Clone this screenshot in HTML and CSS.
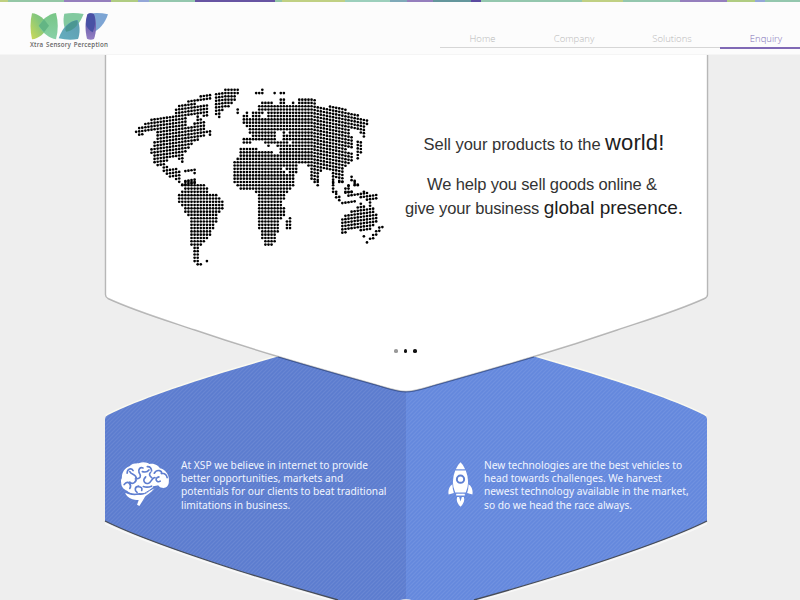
FILE: index.html
```
<!DOCTYPE html>
<html lang="en">
<head>
<meta charset="utf-8">
<title>XSP - Xtra Sensory Perception</title>
<link rel="stylesheet" href="styles.css">
</head>
<body>
<header class="header">
  <div class="strip"></div>
  <div class="bar">
    <div class="brand">
      <svg class="logo" viewBox="0 0 240 84" width="80" height="28">
        <defs>
          <linearGradient id="g1" x1="0" y1="1" x2="1" y2="0"><stop offset="0" stop-color="#cfda55"/><stop offset=".6" stop-color="#84c77c"/><stop offset="1" stop-color="#72bd80"/></linearGradient>
          <linearGradient id="g2" x1="0" y1="0" x2="0" y2="1"><stop offset="0" stop-color="#78c686"/><stop offset="1" stop-color="#88d0a8"/></linearGradient>
          <linearGradient id="g3" x1="0" y1="1" x2="1" y2="0"><stop offset="0" stop-color="#64aebf"/><stop offset="1" stop-color="#5f9db0"/></linearGradient>
          <linearGradient id="g4" x1="0" y1="0" x2="0" y2="1"><stop offset="0" stop-color="#4f4a9f"/><stop offset="1" stop-color="#9580c4"/></linearGradient>
        </defs>
        <path fill="url(#g1)" d="M6 4C26 4 46 24 55 42C46 63 25 81 6 82C0 55 0 28 6 4Z"/>
        <path fill="url(#g2)" d="M78 3C56 6 35 23 26 42C37 62 58 79 78 82C85 56 85 28 78 3Z"/>
        <path fill="#63b584" d="M42 22L57 41L42 61L26 41Z"/>
        <path fill="#82c99f" d="M103 5Q131 0 161 6C150 34 133 53 110 61C101 46 98 24 103 5Z"/>
        <path fill="url(#g3)" d="M86 79C98 47 116 27 143 24C151 44 150 66 144 81Q116 86 86 79Z"/>
        <path fill="#4b9792" d="M140 25C146 34 141 43 134 47C126 54 117 58 109 59Q104 54 107 45Q121 28 140 25Z"/>
        <path fill="#7da5d4" d="M176 5Q205 0 234 7C225 34 208 54 188 62L170 40Z"/>
        <path fill="url(#g4)" d="M172 7Q183 0 192 7C201 29 199 62 192 81Q182 86 171 80C165 57 165 29 172 7Z"/>
        <path fill="#4851a5" d="M175 5Q187 3 192 9Q200 35 188 61Q175 55 168 39Q168 20 175 5Z"/>
      </svg>
      <div class="tagline">Xtra Sensory Perception</div>
    </div>
    <nav class="nav">
      <a class="item home">Home</a><a class="item company">Company</a><a class="item solutions">Solutions</a><a class="item enquiry">Enquiry</a>
    </nav>
  </div>
</header>
<main class="stage">
  <svg class="backdrop" viewBox="0 55 800 545" width="800" height="545">
    <defs>
      <pattern id="hatch" width="4" height="4" patternUnits="userSpaceOnUse">
        <path d="M-1 1L1 -1M0 4L4 0M3 5L5 3" stroke="#fff" stroke-opacity=".08" stroke-width="1.200"/>
      </pattern>
      <clipPath id="hex"><path d="M105 521V419Q105 416.500 108 415C140 399 190 383 222 373L278 356.500L406 320L534 356.500L590 373C622 383 672 399 704 415Q707 416.500 707 419V521C673 538 622 555 574 570.500Q524 586 474 600L406 618L338 600Q288 586 238 570.500C190 555 139 538 105 521Z"/></clipPath>
    </defs>
    <path fill="none" stroke="#fbfaf0" stroke-width="3" d="M106 416C140 399 190 383 222 373L278 356.500M534 356.500L590 373C622 383 672 399 706 416"/>
    <g clip-path="url(#hex)">
      <path fill="#5c7ccf" d="M105 320H406V620H105Z"/>
      <path fill="#6488dd" d="M406 320H708V620H406Z"/>
      <path fill="url(#hatch)" d="M105 320H708V620H105Z"/>
    </g>
    <path fill="none" stroke="#fff" stroke-opacity=".6" stroke-width="1.500" d="M105 523.500C139 540 190 557 238 572.500Q288 588 338 602M707 523.500C673 540 622 557 574 572.500Q524 588 474 602"/>
    <path fill="none" stroke="#464c58" stroke-width="1.300" d="M105 521C139 538 190 555 238 570.500Q288 586 338 600M707 521C673 538 622 555 574 570.500Q524 586 474 600"/>
    <ellipse cx="406" cy="602" rx="8" ry="3" fill="#d8dbe6"/>
    <path fill="#fff" stroke="#000" stroke-opacity=".26" stroke-width="1.400" d="M105.500 50V294.500Q105.500 297 108 298.500C135 311 165 320 195 330Q236 344 278 356.500Q320 369 370 383C385 387 396 391.500 406 391.500C416 391.500 427 387 442 383Q492 369 534 356.500Q576 344 617 330C647 320 677 311 704.500 298.500Q707.500 297 707.500 294.500V50Z"/>
    <path fill="none" stroke="#2b4584" stroke-opacity=".5" d="M278 357Q320 369.500 370 383.500C385 387.500 396 392 406 392C416 392 427 387.500 442 383.500Q492 369.500 534 357"/>
  </svg>
  <section class="hero">
    <svg class="map" id="map" viewBox="0 0 780 580" width="260" height="193"></svg>
    <div class="pitch">
      <p class="l1"><span>Sell your products to the </span><b class="world">world!</b></p>
      <p class="l2">We help you sell goods online &amp;</p>
      <p class="l3"><span>give your business </span><b class="global">global presence.</b></p>
    </div>
  </section>
  <div class="dots"><i class="dot on"></i><i class="dot"></i><i class="dot"></i></div>
  <section class="features">
    <article class="feature brain">
      <svg viewBox="0 0 150 136" width="50" height="45">
        <path fill="#fff" d="M5 49C5 31 14 18 28 13C38 2 52 5 58 3C70-2 83 2 88 6C103 2 117 12 120 19C138 23 149 40 147 57C148 73 137 82 123 77C117 76 116 69 113 71L99 73C101 80 90 82 84 91C74 98 62 96 59 94C45 99 29 96 22 88C10 82 3 75 3 62Q1 55 5 49Z"/>
        <path fill="#fff" d="M15 93C28 101 43 101 57 99C69 102 82 95 90 87L104 79L94 90C83 100 76 101 73 109L58 133L51 129L56 115C40 115 21 110 15 93Z"/>
        <path fill="none" stroke="#5f7ed0" stroke-width="5" stroke-linecap="round" d="M21 34C21 20 34 17 39 26M29 29C32 39 48 36 48 48C51 61 37 69 29 61M12 68C26 51 35 72 29 80M46 51C63 51 64 42 57 32C54 22 60 15 69 18M67 29Q81 33 87 24M82 14Q94 13 95 27M77 45C66 56 74 68 86 64C96 60 95 48 105 47M95 47Q84 39 92 31M103 34C111 20 128 26 125 35M124 34Q139 33 142 47M117 45C101 49 111 65 121 58M56 73C43 75 43 86 51 92M54 74Q69 76 65 86M70 74Q82 78 95 73"/>
        <path fill="none" stroke="#5f7ed0" stroke-width="3" d="M15 90Q38 101 57 97Q75 98 88 86L101 77"/>
      </svg>
      <p>At XSP we believe in internet to provide<br>better opportunities, markets and<br>potentials for our clients to beat traditional<br>limitations in business.</p>
    </article>
    <article class="feature rocket">
      <svg viewBox="0 0 74 136" width="25" height="45">
        <g fill="#fff">
          <path d="M37 1Q46 9 51 22H23Q28 9 37 1ZM21 26H53Q67 62 53 92H21Q7 62 21 26Z"/>
          <path d="M13 67C2 73-1 87 1 98L17 94Q12 80 13 67ZM61 67C72 73 75 87 73 98L57 94Q62 80 61 67ZM24 96H50V101H24ZM27 106H33L37 119L41 106H47Q52 121 37 135Q22 121 27 106Z"/>
        </g>
        <circle cx="37" cy="52" r="11" fill="#fff" stroke="#5f80d3" stroke-width="6"/>
      </svg>
      <p>New technologies are the best vehicles to<br>head towards challenges. We harvest<br>newest technology available in the market,<br>so do we head the race always.</p>
    </article>
  </section>
</main>
<script src="map.js"></script>
</body>
</html>
```
FILE: styles.css
```
* { box-sizing: border-box; }
body {
  margin: 0;
  width: 800px;
  height: 600px;
  overflow: hidden;
  background: #eee;
  font-family: "Open Sans", "Noto Sans", sans-serif;
}
p { margin: 0; }
.header { height: 55px; background: #fcfcfc; border-bottom: 1px solid #f5f5f5; }
.strip {
  height: 2px;
  background: linear-gradient(90deg,
    #bfd080 0 8px, #94c7a6 8px 64px, #957fbd 64px 111px, #b0cc82 111px 138px,
    #94a7d8 138px 149px, #94c7ae 149px 195px, #6754a2 195px 275px, #94c7a6 275px 282px,
    #c0d083 282px 345px, #9ccfbc 345px 390px, #7fa9b8 390px 407px, #957fbd 407px 433px,
    #64969c 433px 471px, #5b4ba0 471px 481px, #94c7ae 481px 582px, #c0d083 582px 623px,
    #94c7ae 623px 680px, #957fbd 680px 727px, #b0cc82 727px 755px, #94a7d8 755px 765px,
    #94c7ae 765px);
}
.bar { display: flex; justify-content: space-between; height: 52px; }
.brand { width: 110px; padding: 10px 0 0 29.500px; }
.logo { display: block; }
.tagline {
  padding-left: .5px;
  font: 600 6.200px/9px "Open Sans", sans-serif;
  letter-spacing: .18px;
  word-spacing: 1px;
  white-space: nowrap;
  color: #666;
}
.nav { display: flex; width: 360px; height: 47px; overflow: hidden; }
.item {
  flex: none;
  height: 46px;
  padding: 29px 0 0 1px;
  border-bottom: 1px solid #d6d6d6;
  text-align: center;
  font-size: 9.500px;
  line-height: 15px;
  font-weight: 300;
  color: #b8b8b8;
}
.home { width: 84px; }
.company { width: 99px; }
.solutions { width: 97px; }
.enquiry { width: 91px; height: 47px; color: #7f6fb8; border-bottom: 2px solid #8069b5; }
.stage { position: relative; height: 545px; }
.backdrop { position: absolute; top: 0; left: 0; }
.hero { position: relative; display: flex; height: 287px; padding: 25px 0 0 125px; }
.pitch {
  width: 318px;
  padding-top: 51px;
  text-align: center;
  font-family: "Liberation Sans", sans-serif;
  font-size: 16.500px;
  line-height: 24px;
  color: #333;
  white-space: nowrap;
}
.pitch b { font-weight: 400; color: #1d1d1d; }
.l1 { height: 24px; margin-bottom: 17px; letter-spacing: -.04px; }
.l2 { padding-right: 4px; letter-spacing: -.15px; }
.l3 { letter-spacing: -.13px; }
.world { font-size: 22px; letter-spacing: .1px; }
.global { font-size: 19px; letter-spacing: 0; }
.dots {
  position: relative;
  display: flex;
  gap: 6px;
  height: 119px;
  padding: 7px 0 0 394px;
}
.dot { width: 3.700px; height: 3.700px; border-radius: 50%; background: #111; }
.on { background: #999; }
.features {
  position: relative;
  display: grid;
  grid-template-columns: 301px 301px;
  padding-left: 105px;
}
.feature {
  display: flex;
  color: #f1f5fe;
  font-family: "Noto Sans", "Open Sans", sans-serif;
  font-size: 10.200px;
  line-height: 13.200px;
  white-space: nowrap;
}
.feature svg { margin-top: 1px; }
.feature p { margin-top: -2px; }
.brain { padding-left: 15px; gap: 11px; }
.rocket { padding-left: 42px; gap: 11px; }
```
FILE: map.js
```
const land = [
  // North America
  "22,154 60,128 90,108 150,104 150,92 185,85 205,78 248,70 249,105 235,112 225,100 195,106 182,112 182,134 190,142 203,142 203,120 218,105 235,120 240,145 257,148 256,165 240,165 225,180 200,192 190,210 180,225 168,230 180,240 180,250 165,250 163,237 130,238 122,255 130,268 152,262 165,275 165,308 140,293 113,280 110,262 90,258 85,235 76,222 80,195 90,180 92,160 80,150 60,158 42,170",
  "148,85 190,64 192,88 150,96", "195,66 225,46 260,40 256,56 225,66 198,76",
  "258,50 290,32 310,24 330,20 352,34 335,50 325,76 305,80 290,95 284,114 266,108 266,75 275,58",
  "322,80 350,80 346,92 338,100", "176,268 210,268 210,280 178,280",
  // South America
  "158,306 175,308 185,298 208,298 215,308 244,318 250,346 275,346 297,372 292,390 276,400 276,425 265,445 257,470 240,485 222,500 220,545 232,552 225,560 205,548 203,505 191,502 193,410 180,397 172,377 155,367 155,345 175,328",
  "238,542 248,542 248,552 238,552",
  // Africa and Madagascar
  "343,205 405,203 405,216 455,218 465,240 480,275 492,292 512,295 510,312 495,330 480,350 473,375 484,393 480,412 465,420 462,450 455,475 445,495 417,495 405,455 396,432 402,408 396,370 396,352 390,330 355,336 335,322 322,297 322,250 343,230",
  "482,430 502,398 502,448 482,452",
  // Europe and Asia
  "350,172 376,172 370,140 380,120 376,100 395,90 398,72 420,60 440,65 460,78 468,50 482,52 482,70 510,68 520,80 522,50 545,50 572,62 580,78 600,82 620,72 650,82 680,100 732,118 732,142 718,140 722,170 710,174 704,152 680,145 675,165 688,180 682,202 662,205 680,220 685,240 668,255 655,270 658,285 640,300 625,290 618,275 610,275 600,265 595,275 584,285 586,320 576,320 560,300 558,270 545,255 515,250 522,275 500,292 480,290 460,245 460,215 440,196 420,200 408,182 390,190 378,194 350,194",
  "352,120 358,96 372,100 382,136 360,140",
  "390,35 416,28 416,46 390,46", "446,30 454,30 454,40 446,40", "462,32 480,34 492,50 472,46",
  "693,178 712,190 712,215 700,240 694,225 700,200",
  // Southeast Asia and Oceania
  "620,285 658,285 655,305 640,315 634,300 632,330 652,365 640,365 618,325",
  "652,335 670,312 678,325 698,346 665,350", "650,364 692,360 692,372 655,376",
  "678,280 690,295 703,318 692,322 680,302",
  "690,340 720,335 740,348 765,338 752,362 735,362 700,352",
  "650,465 650,415 665,405 690,385 705,370 720,376 725,385 732,360 745,385 758,405 757,425 738,450 712,460 700,445 680,448",
  "758,432 778,445 756,472 730,490 722,486 745,465 758,450", "712,462 722,462 722,473 712,473"
];
const water = [
  "455,158 468,158 478,182 452,178", "484,154 494,158 496,196 484,196 490,176",
  "404,112 420,90 432,104 415,120", "468,262 488,272 496,290 480,280",
  "375,186 408,178 425,200 450,192 460,210 430,214 378,202", "195,108 218,104 203,140 190,140", "222,190 260,170 250,190"
];
const parse = list => list.map(s => s.split(" ").map(p => p.split(",").map(Number)));
const inside = (x, y, poly) => {
  let hit = false;
  for (let i = 0, j = poly.length - 1; i < poly.length; j = i++) {
    const [ax, ay] = poly[i], [bx, by] = poly[j];
    if ((ay > y) !== (by > y) && x < (bx - ax) * (y - ay) / (by - ay) + ax) hit = !hit;
  }
  return hit;
};
// Rows bend towards both edges of the map.
const bend = (x, y) => {
  if (x < 300 && y < 300) return (300 - x) * 0.14;
  if (x > 560 && y < 300) return (x - 560) * 0.2;
  if (x > 610 && y > 340) return (610 - x) * 0.14;
  return 0;
};
const lands = parse(land), waters = parse(water);
let dots = "";
for (let gx = 5; gx < 780; gx += 9.25) {
  for (let gy = -40; gy < 600; gy += 9.9) {
    const y = gy + bend(gx, gy);
    if (lands.some(p => inside(gx, y, p)) && !waters.some(p => inside(gx, y, p))) {
      dots += `<circle cx="${gx}" cy="${y.toFixed(1)}" r="4"/>`;
    }
  }
}
document.getElementById("map").innerHTML = dots;
```
